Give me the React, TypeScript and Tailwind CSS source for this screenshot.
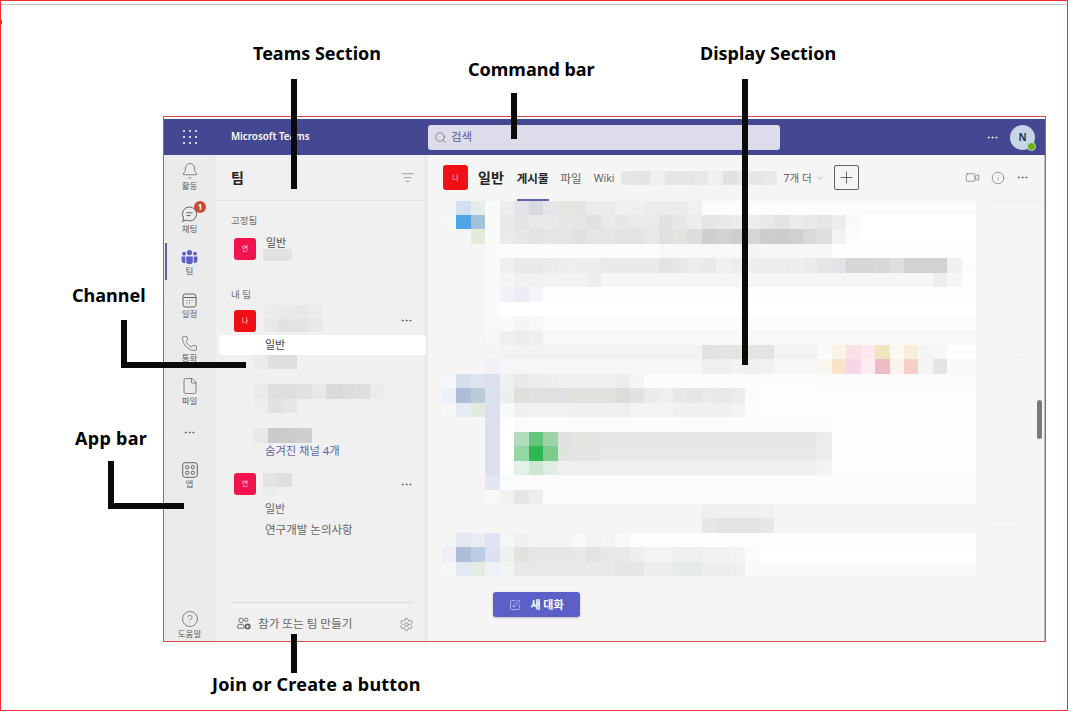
import React from "react";
import { Bell, Phone, File, CircleHelp, Settings, Video, Info, Search, SquarePen, Plus, ChevronDown, MoreHorizontal, ListFilter } from "lucide-react";

const MAIN = [
  "f5f5f5 d3e0f1 e4ede9 fafafa ededed e3e3e8 d8d9df e6e6ea e5e5e2 e3e5e3 ebebeb ebebeb efefef efefef ececec ececec ebebeb f0f0f0 fcfcfc:19",
  "f5f6f8 4fa4e6 a3c1d9 fafafa e9e9e7 e4e4e4 e9e9e7 e8e9e8 e6e8e7 e5e6e5 e1e1e3 e8ebea e6e7e7 eaeaea eaeaea e2e2e2 e7e7e7 ebeeed e6e6e6 e9e8e8 ebebeb ececec e8e8e8 e4e4e4 ebebeb e6e9e8 e5e6e6 ebedef fafafa ffffff:8",
  "f5f5f5 f5f5f5 e3ecd9 fafafa eaeaea e7e7e7 e2e2e2 e6e6e6 e6e4e4 e1e1e1 e4e5e6 e5e5e5 e3e3e3 e3e3e3 e8e8e8 dfe0e1 e4e3df dddddd cfcfcf d2d2d2 cdcdcd d5d5d5 cdcdcd cccccc cfd0cf dadada dfdfdf f3f3f3 fcfcfc ffffff:8",
  "f5f5f5:3 fafafa fbfbfb:11 f8f8f8:6 f5f5f5 f7f7f7:5 fefefe:10",
  "f5f5f5:3 fafafa efefef e9e9e9:2 ebebed ededed eeeeee:2 e9e9e9:4 e3e3e3 e7e7e7 ececea e9e9e9 eff1f0 ececec eeeeee ececee:2 eeeeee ebebeb e4e6e5 e2e3e6 d6d6d6:2 d8d8d8 dededc d2d2d4:3 eff1f0 fcfcfc",
  "f5f5f5:3 fafafa f5f5f5 f1f1f1:2 f2f2f2:3 eeeeee f6f6f6:23 ededed f6f6f6 fdfdfd",
  "f5f5f5:3 fafafa f1f1f7 ececf5 f4f4f9 fefefe:30",
  "f5f5f5:3 fafafa ffffff:33",
  "f5f5f5:3 f8f8f8 fafafa f5f5f5 f7f7f7 fbfbfb:30",
  "f5f5f5:3 f7f7f7 efefef ececea efefef f8f8f8:30",
  "f5f5f5:4 f3f3f3:14 e1e1e1 e3e3e5 e3e3e0 e3e3e3 e3e3e3 f3f3f3:3 fafafa faf6e6 fadfe5 fce8ed f3e4c0 fcf8f0 f6eed8 f5f5f5 f7f7f7 fdfdfd:2",
  "f5f5f5:3 f1f0f6 f6f6f6:14 efefef efefef f3f3f1 f0f0f0 f1f1f1 f6f6f6:3 f9f6ef f9e4cb f7d7e7 fbedf3 efbcc6 fbf3ee f5d0c9 f5f5f5 e4e4e4 fafafa:2",
  "f5f6f9 d3e0ec dde4ef dcdfee f0f0f0 e9e9e9 ededed eeeeec f0f0f0:4 ececec f5f5f5 fcfcfc:12 fbfbfb:11",
  "edf1f7 adbdd8 bccbd8 dcdfee eeeeee dfdfdc e1e1df dfe0df:2 e1e1de:3 dcdcdc e2e2e2 ebebeb efefed e8e8e8 e5e5e5 eaeaea e8e8e8 ececec fbfbfb fdfdfd:15",
  "f7f7f7 e5eaf4 e1eadf dcdfee f8f8f8 f0f0ee f1f1ef:3 efefef:4 f3f3f3:3 eff1f1:4 f2f4f3 fcfcfc fdfdfd:15",
  "f5f5f5:3 dcdfee ffffff fbfbfb:22 fdfdfd:10",
  "f5f5f5:3 dcdfee ffffff b3dcbd 62c47d 9dd3a6 dfe2df e4e4e1 e3e3e3 e7e7e7:15 ececec fdfdfd:10",
  "f5f5f5:3 dcdfee ffffff 95d6a5 2eb851 7ecb8e dee4de e4e4e4:2 e8e8e8:15 ededed fdfdfd:10",
  "f5f5f5:3 dcdfee ffffff e4f1e6 cde7d3 dfede2 efefef:18 f4f4f4 fdfdfd:10",
  "f5f5f5:3 e5e6f3 fbfbfb:33",
  "f5f5f5:3 f8f8f8 f2f2f2 e6e6e4 ededed fbfbfb:30",
  "f5f5f5:18 efefed f0f0ee:3 f1f1f1 f5f5f5:14",
  "f5f5f5:18 e7e7e7 e3e3e3:3 e7e7e7 f5f5f5:14",
  "f5f5f5 e3e8f1 e9edf3 e2e3f2 f6f6f6 f0f0f0 f4f4f4 f3f3f3:2 f8f8f8 f3f3f3 f5f5f5 f8f8f8 fdfdfd:24",
  "eef0f5 adbdd8 bccde3 dfe1f3 f0f0f0 e2e2df e6e6e4:3 e8e8e6 e3e3e3 e8e8e6 e9e9e9 eeeeee f3f3f3:2 eef0f0:2 f1f1f1:2 f3f3f3 fbfbfb ffffff:15",
  "f6f6f6 e3e8f3 e3ece1 eff1f8 f4f4f4 e8e8e6 e8e8e8:4 e9e9e7:2 e6e6e6:2 ededed:2 e7eaea:2 ededed:2 efefef fafafa:16",
];

function Mosaic({ rows }: { rows: string[] }) {
  return (
    <div className="flex flex-col">
      {rows.map((row, r) => {
        const cells: string[] = [];
        row.split(" ").forEach((tok) => {
          const [c, n] = tok.split(":");
          for (let i = 0; i < Number(n || 1); i++) cells.push(c);
        });
        return (
          <div key={r} className="flex h-[14.46px]">
            {cells.map((c, i) => (
              <div key={i} className="h-full w-[14.44px] shrink-0" style={{ backgroundColor: "#" + c }} />
            ))}
          </div>
        );
      })}
    </div>
  );
}

function RailItem({ label, h = "h-[43px]", children }: { label?: string; h?: string; children: React.ReactNode }) {
  return (
    <div className={`relative flex ${h} flex-col items-center justify-center`}>
      {children}
      {label && <span className="mt-[1px] text-[8.5px] leading-[10px] text-[#5c5c5c]">{label}</span>}
    </div>
  );
}

function TeamsIcon() {
  return (
    <svg width="17" height="15" viewBox="0 0 17 15" fill="#5b5fc7">
      <circle cx="8.5" cy="2.6" r="2.6" />
      <circle cx="3" cy="3.6" r="1.9" />
      <circle cx="14" cy="3.6" r="1.9" />
      <path d="M5.2 6.4h6.6v4.6a3.3 3.3 0 0 1-6.6 0z" />
      <path d="M0.6 6.4h3.6v4.6c0 .7.1 1.3.3 1.8A2.8 2.8 0 0 1 .6 10z" />
      <path d="M16.4 6.4h-3.6v4.6c0 .7-.1 1.3-.3 1.8a2.8 2.8 0 0 0 3.9-2.8z" />
    </svg>
  );
}

function ChatIcon() {
  return (
    <svg width="17" height="17" viewBox="0 0 17 17" fill="none" stroke="#616161" strokeWidth="1">
      <path d="M8.5 1a7 7 0 1 1-3.4 13.1L1.6 15.4l1.1-3.3A7 7 0 0 1 8.5 1z" />
      <path d="M5.5 6.8h6M5.5 9.6h4" />
    </svg>
  );
}

function CalendarIcon() {
  return (
    <svg width="15" height="15" viewBox="0 0 15 15" fill="none" stroke="#616161" strokeWidth="1">
      <rect x="1" y="1" width="13" height="13" rx="2.4" />
      <path d="M1 4.5h13" />
      <path d="M4.5 7.5h1M7 7.5h1M9.5 7.5h1M4.5 10h1M7 10h1" strokeWidth="1.2" />
    </svg>
  );
}

function AppsIcon() {
  return (
    <svg width="16" height="16" viewBox="0 0 16 16" fill="none" stroke="#616161" strokeWidth="1">
      <rect x="0.7" y="0.7" width="14.6" height="14.6" rx="2.6" />
      <rect x="3.7" y="3.7" width="3" height="3" rx="0.8" />
      <rect x="9.3" y="3.7" width="3" height="3" rx="0.8" />
      <rect x="3.7" y="9.3" width="3" height="3" rx="0.8" />
      <rect x="9.3" y="9.3" width="3" height="3" rx="0.8" />
    </svg>
  );
}

function JoinIcon() {
  return (
    <svg width="14" height="13" viewBox="0 0 14 13" fill="none" stroke="#616161" strokeWidth="0.9">
      <circle cx="4" cy="3.4" r="2.2" />
      <circle cx="9.2" cy="2.8" r="1.7" />
      <path d="M0.8 11.2V9a1.6 1.6 0 0 1 1.6-1.6h3.2A1.6 1.6 0 0 1 7 9v2.2z" />
      <circle cx="10.6" cy="9.6" r="3" fill="#616161" stroke="none" />
      <path d="M10.6 8v3.2M9 9.6h3.2" stroke="#f0f0f0" strokeWidth="0.9" />
    </svg>
  );
}

function Dots({ cls = "text-[#616161]" }: { cls?: string }) {
  return <MoreHorizontal size={13} strokeWidth={1.8} className={cls} />;
}

function Avatar({ ch, color, size = "w-[22px] h-[22px]" }: { ch: string; color: string; size?: string }) {
  return (
    <div className={`flex ${size} shrink-0 items-center justify-center rounded-[3px] text-[7px] text-[#ffffffcc] ${color}`}>{ch}</div>
  );
}

function Label({ cls, children }: { cls: string; children: React.ReactNode }) {
  return <div className={`absolute whitespace-nowrap text-[18px] font-bold leading-[24px] text-black ${cls}`}>{children}</div>;
}

function Bar({ cls }: { cls: string }) {
  return <div className={`absolute bg-[#0a0a0a] ${cls}`} />;
}

export default function App() {
  return (
    <div className="relative h-[711px] w-[1068px] overflow-hidden border border-[#f02d2d] bg-white font-['Noto_Sans','Noto_Sans_CJK_KR',sans-serif]">
      <div className="mt-[115px] ml-[162px] flex h-[526px] w-[883px] flex-col border border-[#e0484f] pt-[2px]">
        {/* Command bar */}
        <div className="flex h-[36px] shrink-0 items-center bg-[#444791] pr-[10px]">
          <div className="flex w-[51px] justify-center">
            <svg width="14" height="14" viewBox="0 0 14 14" fill="#fff">
              {[1, 7, 13].flatMap((y) => [1, 7, 13].map((x) => <circle key={`${x}-${y}`} cx={x} cy={y} r="1" />))}
            </svg>
          </div>
          <div className="ml-[16px] w-[197px] text-[9.8px] font-semibold text-white">Microsoft Teams</div>
          <div className="flex h-[25px] w-[352px] items-center gap-[4px] rounded-[3px] bg-[#dcdcea] pl-[6px] text-[11.5px] text-[#5d5b9c]">
            <Search size={13} strokeWidth={1.2} className="text-[#616161]" />
            <span>검색</span>
          </div>
          <div className="ml-auto flex items-center gap-[11px]">
            <Dots cls="text-white" />
            <div className="relative flex h-[25px] w-[25px] items-center justify-center rounded-full bg-[#c8d5e8] text-[10px] font-bold text-[#1f3556]">
              N
              <div className="absolute right-[-1px] bottom-[-1px] h-[9px] w-[9px] rounded-full border border-[#c8d5e8] bg-[#6bb700]" />
            </div>
          </div>
        </div>

        <div className="flex min-h-0 flex-1">
          {/* App bar */}
          <div className="relative flex w-[51px] shrink-0 flex-col bg-[#ebebeb]">
            <RailItem label="활동"><Bell size={18} strokeWidth={1} className="text-[#616161]" /></RailItem>
            <RailItem label="채팅">
              <ChatIcon />
              <div className="absolute top-[3px] left-[30px] flex h-[12px] w-[12px] items-center justify-center rounded-full bg-[#cc4a31] text-[8px] font-bold text-white">1</div>
            </RailItem>
            <RailItem label="팀">
              <TeamsIcon />
            </RailItem>
            <div className="absolute top-[88px] left-[1px] h-[37px] w-[2px] bg-[#6264a7]" />
            <RailItem label="일정"><CalendarIcon /></RailItem>
            <RailItem label="통화"><Phone size={17} strokeWidth={1} className="text-[#616161]" /></RailItem>
            <RailItem label="파일"><File size={18} strokeWidth={1} className="text-[#616161]" /></RailItem>
            <RailItem h="h-[38px]"><Dots /></RailItem>
            <RailItem h="h-[48px]" label="앱"><AppsIcon /></RailItem>
            <div className="mt-auto">
              <RailItem h="h-[34px]" label="도움말"><CircleHelp size={18} strokeWidth={1} className="text-[#616161]" /></RailItem>
            </div>
          </div>

          {/* Teams section */}
          <div className="flex w-[213px] shrink-0 flex-col border-r-[4px] border-l-[1px] border-r-[#ebebeb] border-l-[#e6e6e6] bg-[#f0f0f0]">
            <div className="flex h-[46px] shrink-0 items-center justify-between border-b border-[#e2e2e2] pr-[10px] pl-[15px]">
              <span className="text-[14px] font-bold text-[#242424]">팀</span>
              <ListFilter size={13} strokeWidth={1} className="text-[#616161]" />
            </div>
            <div className="mt-[13px] pl-[15px] text-[9.5px] leading-[14px] text-[#707070]">고정됨</div>
            <div className="mt-[10px] flex pl-[18px]">
              <Avatar ch="연" color="bg-[#f0134d]" />
              <div className="ml-[7px] flex flex-col">
                <span className="mt-[-1px] ml-[3px] text-[11px] leading-[11px] text-[#505050]">일반</span>
                <div className="mt-[1px] h-[12px] w-[29px] bg-[#e2e2e2]" />
              </div>
            </div>
            <div className="mt-[27px] pl-[15px] text-[9.5px] leading-[14px] text-[#707070]">내 팀</div>
            <div className="relative mt-[3px] flex h-[27px] shrink-0 items-start pl-[18px]">
              <div className="mt-[5px]"><Avatar ch="나" color="bg-[#f00f14]" /></div>
              <div className="ml-[8px] h-[27px] w-[58px] overflow-hidden">
                <Mosaic rows={["ebebeb e9e9e9 e8e8e8 ebebeb", "e8e8e8 e2e2e2 e3e3e3 e8e8e8"]} />
              </div>
              <div className="absolute top-[9px] right-[11px]"><Dots /></div>
            </div>
            <div className="mt-[3px] ml-[3px] flex h-[20px] w-[207px] shrink-0 items-center rounded-[3px] bg-white pl-[46px] text-[11px] text-[#424242]">일반</div>
            <div className="ml-[38px]">
              <Mosaic rows={["ebebeb dedede:2"]} />
              <div className="h-[15px]" />
              <Mosaic rows={["eaeaea dedede:2 e2e2e2 e8e8e8 dadada dcdcdc dedede ebebeb", "eeeeee e2e2e2 e6e6e6"]} />
              <div className="h-[15px]" />
              <Mosaic rows={["e8e8e8 cbcaca cccaca cfcfcf"]} />
            </div>
            <div className="pl-[49px] text-[11.3px] leading-[16px] text-[#6264a7]">숨겨진 채널 4개</div>
            <div className="relative mt-[14px] flex pl-[18px]">
              <Avatar ch="연" color="bg-[#f0134d]" />
              <div className="ml-[7px]">
                <Mosaic rows={["e3e3e3 dedede f0f0f2"]} />
                <div className="h-[8px] w-[14px] bg-[#ebebeb]" />
              </div>
              <div className="absolute top-[5px] right-[11px]"><Dots /></div>
            </div>
            <div className="mt-[6px] pl-[49px] text-[11px] leading-[16px] text-[#666666]">일반</div>
            <div className="mt-[5px] pl-[49px] text-[11.5px] leading-[16px] text-[#666666]">연구개발 논의사항</div>
            <div className="mt-auto mr-[11px] ml-[15px] flex h-[39px] items-center justify-between border-t border-[#dcdcdc] pt-[4px]">
              <div className="flex items-center gap-[7px] pl-[6px] text-[11.6px] text-[#666666]">
                <JoinIcon />
                <span>참가 또는 팀 만들기</span>
              </div>
              <Settings size={15} strokeWidth={1} className="mr-[-1px] text-[#616161]" />
            </div>
          </div>

          {/* Display section */}
          <div className="relative flex min-w-0 flex-1 flex-col border-r border-[#bdbdbd] bg-[#f5f5f5]">
            <div className="flex h-[45.5px] shrink-0 items-center pl-[15px]">
              <Avatar ch="나" color="bg-[#f00f14]" size="h-[25px] w-[25px]" />
              <span className="ml-[10px] text-[14px] font-bold text-[#242424]">일반</span>
              <div className="relative ml-[13px] flex h-full items-center pt-[2px] text-[11.5px] font-bold text-[#242424]">
                게시물
                <div className="absolute right-0 bottom-0 left-0 h-[1.5px] bg-[#6264a7]" />
              </div>
              <span className="ml-[12px] pt-[2px] text-[11.5px] text-[#616161]">파일</span>
              <span className="ml-[12px] pt-[2px] text-[10.5px] text-[#616161]">Wiki</span>
              <div className="ml-[7px] w-[156px] overflow-hidden">
                <Mosaic rows={["e6e6e6 e3e5e3 efefef e6e6e6 e6e6e6 e8e8e8 f0f0f0 e2e2e2 e8e8e8 e6e6e6 e9e9e9"]} />
              </div>
              <span className="ml-[6px] pt-[2px] text-[10.5px] text-[#616161]">7개 더</span>
              <ChevronDown size={10} strokeWidth={1} className="ml-[3px] text-[#616161]" />
              <div className="ml-[9px] flex h-[25px] w-[25px] items-center justify-center rounded-[2px] border border-[#616161]">
                <Plus size={19} strokeWidth={1} className="text-[#424242]" />
              </div>
              <div className="ml-auto flex items-center gap-[11px] pr-[15px]">
                <Video size={15} strokeWidth={1} className="text-[#616161]" />
                <Info size={14} strokeWidth={1} className="text-[#616161]" />
                <Dots />
              </div>
            </div>
            <div className="pl-[14px]"><Mosaic rows={MAIN} /></div>
            <button className="mt-[16px] ml-[65px] flex h-[25px] w-[87px] items-center justify-center gap-[9px] rounded-[3px] bg-[#5b5fc7] text-[11px] font-bold text-white shadow-[0_1px_2px_#00000040]">
              <SquarePen size={12} strokeWidth={1} />
              새 대화
            </button>
            <div className="absolute top-[46px] right-0 h-[1px] w-[55px] bg-[#ebebeb]" />
            <div className="absolute top-[202px] right-[24px] h-[1px] w-[29px] bg-[#eeeeee]" />
            <div className="absolute top-[366px] right-[24px] h-[1px] w-[29px] bg-[#eeeeee]" />
            <div className="absolute top-[245px] right-[2px] h-[39px] w-[5px] rounded-full bg-[#7a7a7a]" />
          </div>
        </div>
      </div>

      {/* Annotations */}
      <div className="absolute top-[3px] right-0 left-0 h-[1px] bg-[#c4c4c4]" />
      <div className="absolute top-[19px] left-0 h-[4px] w-[1px] bg-[#3b5bdb]" />
      <Label cls="top-[40px] left-[252px]">Teams Section</Label>
      <Label cls="top-[56px] left-[467px]">Command bar</Label>
      <Label cls="top-[40px] left-[699px]">Display Section</Label>
      <Label cls="top-[282px] left-[71px]">Channel</Label>
      <Label cls="top-[425px] left-[74px] tracking-[0.3px]">App bar</Label>
      <Label cls="top-[671px] left-[211px] tracking-[0.2px]">Join or Create a button</Label>
      <Bar cls="top-[78px] left-[290px] h-[110px] w-[6px]" />
      <Bar cls="top-[92px] left-[510px] h-[46px] w-[6px]" />
      <Bar cls="top-[78px] left-[741px] h-[286px] w-[6px]" />
      <Bar cls="top-[633px] left-[290px] h-[39px] w-[6px]" />
      <Bar cls="top-[319px] left-[120px] h-[48px] w-[6px]" />
      <Bar cls="top-[361px] left-[120px] h-[6px] w-[125px]" />
      <Bar cls="top-[460px] left-[107px] h-[48px] w-[6px]" />
      <Bar cls="top-[502px] left-[107px] h-[6px] w-[76px]" />
    </div>
  );
}
